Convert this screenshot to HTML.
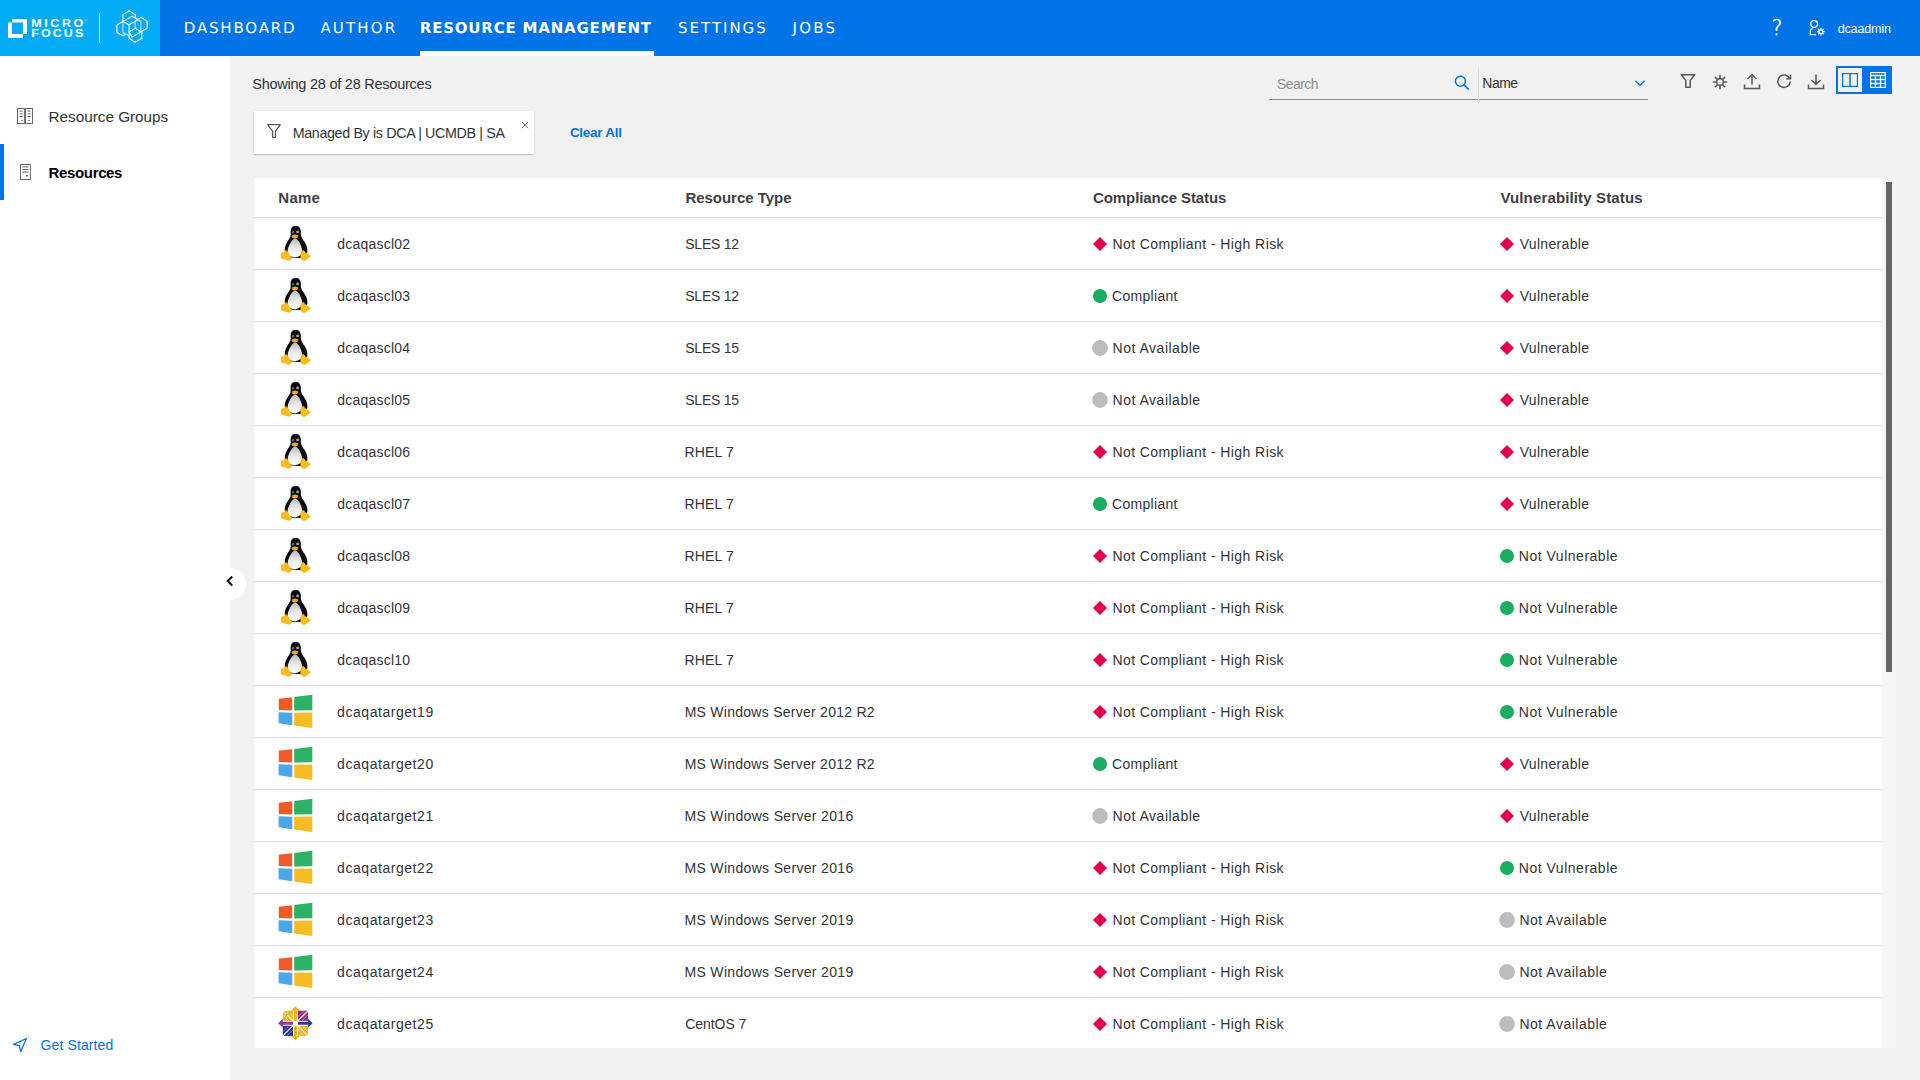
<!DOCTYPE html>
<html lang="en">
<head>
<meta charset="utf-8">
<title>Resource Management - Resources</title>
<style>
*{box-sizing:border-box;margin:0;padding:0}
html,body{width:1920px;height:1080px;overflow:hidden;background:#f1f1f1;font-family:"Liberation Sans",sans-serif;color:#323435}
svg{display:block;overflow:visible}
/* header */
#hdr{position:absolute;left:0;top:0;width:1920px;height:56px;background:#0073e7}
#logo{position:absolute;left:0;top:0;width:160px;height:56px;background:#02abf4}
.nav{position:absolute;top:18px;height:20px;line-height:20px;color:#fff;font-family:"DejaVu Sans","Liberation Sans",sans-serif;font-size:16px;letter-spacing:1.6px;white-space:nowrap;text-rendering:geometricPrecision}
.nav.on{font-weight:bold}
#navbar{position:absolute;left:420px;top:51px;width:234px;height:5px;background:#fff}
#help{position:absolute;left:1767px;top:15px;width:20px;height:26px;line-height:26px;color:#fff;font-family:"DejaVu Sans","Liberation Sans",sans-serif;font-weight:200;font-size:20.5px;-webkit-text-stroke:.5px #fff;text-align:center}
#user{position:absolute;left:1838px;top:19px;height:20px;line-height:20px;color:#fff;font-size:14px;white-space:nowrap}
/* sidebar */
#side{position:absolute;left:0;top:56px;width:230px;height:1024px;background:#fff}
.sitem{position:absolute;left:49px;height:24px;line-height:24px;font-size:16px;white-space:nowrap;color:#323435}
#selbar{position:absolute;left:0;top:88px;width:4px;height:56px;background:#0073e7}
#collapse{position:absolute;left:214px;top:568px;width:32px;height:32px;border-radius:16px;background:#fff}
/* toolbar */
.t{position:absolute;white-space:nowrap;line-height:20px;height:20px}
#chip{position:absolute;left:254px;top:111px;width:280px;height:43px;background:#fff;box-shadow:0 1px 1.500px rgba(0,0,0,.2),0 0 2px rgba(0,0,0,.08)}
.ul{position:absolute;height:1px;background:#8a8b8d;top:99px}
/* table */
#tbl{position:absolute;left:254px;top:178px;width:1628px;height:870px;background:#fff;overflow:hidden}
#thead{position:absolute;left:0;top:0;width:1628px;height:40px;border-bottom:1px solid #dcdee1;box-shadow:0 3px 7px rgba(0,0,0,.04);background:#fff;z-index:2}
.th{position:absolute;top:10px;height:20px;line-height:20px;font-weight:bold;font-size:15px;color:#3f4042;white-space:nowrap}
.row{position:absolute;left:0;width:1628px;height:52px;border-bottom:1px solid #dcdee1}
.c{position:absolute;top:16px;height:20px;line-height:20px;font-size:14px;color:#323435;white-space:nowrap}
.ic{position:absolute;left:24px;top:8px;width:36px;height:36px}
.dot{position:absolute;top:19px;width:14px;height:14px}
#sbtrack{position:absolute;left:1882px;top:178px;width:14px;height:870px;background:#f6f6f6}
#sbthumb{position:absolute;left:1886px;top:182px;width:6px;height:490px;background:#646567}
.tb{position:absolute;top:72px;width:20px;height:20px;fill:none;stroke:#58595b;stroke-width:1.5}
.k0{left:83.30px;letter-spacing:0.207px}
.k1{left:431.25px;letter-spacing:-0.238px}
.k2{left:858.40px;letter-spacing:0.423px}
.k3{left:1265.70px;letter-spacing:0.319px}
.k4{left:858.00px;letter-spacing:0.308px}
.k5{left:431.25px;letter-spacing:-0.238px}
.k6{left:858.60px;letter-spacing:0.504px}
.k7{left:430.50px;letter-spacing:0.153px}
.k8{left:1264.80px;letter-spacing:0.515px}
.k9{left:83.10px;letter-spacing:0.547px}
.k10{left:430.70px;letter-spacing:0.261px}
.k11{left:430.50px;letter-spacing:0.326px}
.k12{left:430.50px;letter-spacing:0.326px}
.k13{left:1265.40px;letter-spacing:0.504px}
.k14{left:431.25px;letter-spacing:-0.063px}
#n1{left:183.75px;font-size:15px;letter-spacing:1.843px}
#n2{left:320.40px;font-size:15px;letter-spacing:2.172px}
#n3{left:419.80px;font-size:15px;letter-spacing:0.803px}
#n4{left:678.10px;font-size:15px;letter-spacing:1.967px}
#n5{left:792.50px;font-size:15px;letter-spacing:2.281px}
#user{left:1837.70px;font-size:12.5px;letter-spacing:-0.15px}
#showing{left:252.25px;font-size:14.5px;letter-spacing:-0.24px}
#s1{left:48.60px;font-size:15.3px;letter-spacing:-0.017px}
#s2{left:48.60px;font-size:15px;letter-spacing:-0.358px}
#gs{left:40.50px;font-size:14px;letter-spacing:0.119px}
#chiptxt{left:38.70px;font-size:14.3px;letter-spacing:-0.359px}
#clear{left:569.90px;font-size:13.5px;letter-spacing:-0.278px}
#search{left:1277.10px;font-size:14px;letter-spacing:-0.594px}
#selname{left:1482.30px;font-size:14px;letter-spacing:-0.52px}
#h1{left:24.35px;font-size:15px;letter-spacing:0.246px}
#h2{left:431.40px;font-size:15px;letter-spacing:-0.024px}
#h3{left:839.10px;font-size:15px;letter-spacing:-0.112px}
#h4{left:1246.40px;font-size:15px;letter-spacing:0.146px}
</style>
</head>
<body>
<svg width="0" height="0" style="position:absolute">
<defs>
<linearGradient id="belly" x1="0" y1="0" x2="0" y2="1"><stop offset="0" stop-color="#b9babc"/><stop offset=".45" stop-color="#e6e6e7"/><stop offset="1" stop-color="#ffffff"/></linearGradient>
<symbol id="tux" viewBox="0 0 36 36">
  <path d="M17.6 -0.2c-3.1 0-5 2.3-5 5.4 0 1.6 .3 3.2 -.2 5 -1.2 3.4-4.6 6.900-5.500 11.200 -.5 2.400 .2 4.500 1.200 6.100l3.500 4.100 13.200 .6 4.300-5.400c.7-2.300 .2-5.600-1.200-8.600 -1.400-3-4.300-5.700-4.900-8.700 -.4-2 .1-3.100-.3-5.100 -.5-2.700-2.400-4.600-5.100-4.600z" fill="#0b0b0b"/>
  <path d="M17.2 12.800c-2.400 .1-3.900 2.400-5.300 5.100 -1.600 3-3 6.300-1.900 9.400 1 2.800 3.900 3.900 6.900 3.900 3 0 5.700-1.400 6.700-4.100 1-2.900 .1-6.300-1.400-9.200 -1.200-2.500-2.700-5.200-5-5.100z" fill="url(#belly)"/>
  <ellipse cx="15.100" cy="6.200" rx="1.100" ry="1.300" fill="#6d6e70"/><ellipse cx="19.600" cy="5.900" rx="1.400" ry="1.300" fill="#a9aaac"/>
  
  <path d="M13.600 10.300c.9-1.300 2.200-2 3.600-1.900 1.300 .1 2.600 .8 3.300 1.700 -.6 1.400-2.100 2.500-3.700 2.600 -1.500 0-2.800-1.100-3.200-2.400z" fill="#f6b51b"/>
  <path d="M14 10.400c1.100 .5 2.100 .7 3.200 .6 1-.1 2.100-.5 3-1" fill="none" stroke="#d98a06" stroke-width=".5"/>
  <path d="M6.700 24.300c1.400-.5 2.600 .6 3.600 2.100l2.700 4.300c.9 1.400 1 3.100-.9 3.700 -1.600 .5-3.200-.1-5-.7 -1.500-.5-3.500-.6-4.300-1.600 -.5-.7 .3-1.700 .3-2.700 0-.9-.5-1.800 .1-2.400 .8-.8 2.100 0 2.700-.9 .4-.6 .1-1.500 .8-1.800z" fill="#f6bd1e"/>
  <path d="M22.800 26.300c.4-1.300 1.500-2.300 2.700-2.100 1.100 .2 1.300 1.500 2.100 2.300 1.200 1.200 3.500 1.900 4.800 3.100 1 .9-.5 1.900-1.700 2.600 -1.500 .9-2.600 2.300-4.400 2.500 -1.700 .2-3.300-.6-3.700-2.400 -.4-2 -.2-4.400 .2-6z" fill="#f6bd1e"/>
  <path d="M7.400 25.600l1 .9m-.2-2l1.300 1.500" stroke="#e6531f" stroke-width=".5" fill="none"/>
</symbol>
<symbol id="win" viewBox="0 0 36 36">
  <path d="M.8 4.800L14.200 3.200V16.500L.8 16z" fill="#f05a28"/>
  <path d="M16.200 3L34.300 .7V16.200L16.200 16.600z" fill="#2db166"/>
  <path d="M.6 18.300L14.300 18.700V31.200L.6 29.300z" fill="#4aa7ea"/>
  <path d="M16.200 18.700L34.300 18.500V34.100L16.200 31.600z" fill="#f6bc25"/>
</symbol>
<symbol id="cent" viewBox="0 0 36 36">
  <g transform="translate(17.400 17.300)">
    <path d="M0 -17.300L4.200 -12.600H1.500V-2.200H-1.500V-12.600H-4.200z" fill="#f3b21f"/>
    <path d="M0 17.300L4.200 12.600H1.500V2.200H-1.500V12.600H-4.200z" fill="#e9bb26"/>
    <path d="M17.300 0L12.600 -4.200V-1.500H2.200V1.500H12.600V4.200z" fill="#303a9b"/>
    <path d="M-17.300 0L-12.600 -4.200V-1.500H-2.200V1.500H-12.600V4.200z" fill="#8c3a86"/>
    <path d="M-12.600 -12.600H-2.400V-2.400H-12.600z" fill="#f0b824"/>
    <path d="M2.400 -12.600H12.600V-2.400H2.400z" fill="#8a2f7e"/>
    <path d="M-12.600 2.400H-2.400V12.600H-12.600z" fill="#2f2f88"/>
    <path d="M2.400 2.400H12.600V12.600H2.400z" fill="#f2b022"/>
    <path d="M-12.600 -12.600L12.600 12.600M12.600 -12.600L-12.600 12.600" stroke="#f3eee6" stroke-width="1.300" fill="none"/>
    <path d="M-8.500 -12.600L-2.400 -6.500M-12.600 -8.500L-6.500 -2.400M8.500 12.600L2.400 6.500M12.600 8.500L6.500 2.400" stroke="#fbe6a8" stroke-width=".7" fill="none"/>
    <path d="M8.500 -12.600L2.400 -6.500M12.600 -8.500L6.500 -2.400" stroke="#c9a0c4" stroke-width=".7" fill="none"/>
    <path d="M-8.500 12.600L-2.400 6.500M-12.600 8.500L-6.500 2.400" stroke="#a9a8d6" stroke-width=".7" fill="none"/>
    <circle cx="-9" cy="-9" r=".6" fill="#35a85a"/><circle cx="-6" cy="-10.500" r=".6" fill="#35a85a"/><circle cx="-10.500" cy="-5" r=".6" fill="#35a85a"/><circle cx="-7" cy="-4" r=".6" fill="#35a85a"/>
    <circle cx="0" cy="6" r=".6" fill="#35a85a"/><circle cx=".5" cy="9" r=".6" fill="#35a85a"/><circle cx="-.4" cy="12" r=".6" fill="#35a85a"/><circle cx="0" cy="14.500" r=".6" fill="#35a85a"/>
    <path d="M-12 .1H-3" stroke="#e4558f" stroke-width=".8" stroke-dasharray="1 1" fill="none"/>
    <path d="M6 -10.500H11" stroke="#e4558f" stroke-width=".8" stroke-dasharray="1 1" fill="none"/>
    <rect x="-2.200" y="-2.200" width="4.400" height="4.400" fill="#fff"/>
  </g>
</symbol>
</defs>
</svg>
<!-- HEADER -->
<div id="hdr">
  <div id="logo">
    <svg width="160" height="56" viewBox="0 0 160 56">
      <path fill-rule="evenodd" fill="#fff" d="M12 19H27V34H23V38H8V22.500H12zM12 22.500V34H23V22.500z"/>
      <text transform="translate(31.300 26.600) scale(1.220 1)" font-family="Liberation Sans, sans-serif" font-weight="bold" font-size="10.300" fill="#fff" textLength="42.600" lengthAdjust="spacing">MICRO</text>
      <text transform="translate(31.300 37) scale(1.220 1)" font-family="Liberation Sans, sans-serif" font-weight="bold" font-size="10.300" fill="#fff" textLength="42.600" lengthAdjust="spacing">FOCUS</text>
      <text x="84.300" y="22.300" font-family="Liberation Sans, sans-serif" font-size="3.200" fill="#cfeefd">®</text>
      <rect x="99" y="13" width="1" height="30" fill="#fff"/>
      <g fill="none" stroke="#fff" stroke-width="1.100" stroke-linejoin="round" stroke-linecap="round">
        <path d="M122.900 21.600V14.700L129.100 10.700L135.300 14.700V18.200"/>
        <path d="M122.900 21.600L132 16.200L138.200 19.600L129.100 24.700Z"/>
        <path d="M129.100 24.700V38.200L135.100 42.200L141.800 38.400V31.800"/>
        <path d="M122.900 21.600L116.900 25.100V32.400L122.900 35.800L125.800 34"/>
        <path d="M138.200 19.600L141.100 17.300L147.100 21.300V28.200L141.100 31.800"/>
        <path d="M129.100 32L135.100 28.200L141.100 31.800L132.200 37.100Z"/>
        <path d="M122.900 21.600V32.400L129.100 36" stroke="#bfe6fc"/>
        <path d="M135.100 21.600V28.200M140.900 21.800V31.100M138.200 19.600L140.900 21.800" stroke="#bfe6fc"/>
      </g>
    </svg>
  </div>
  <div class="nav" id="n1">DASHBOARD</div>
  <div class="nav" id="n2">AUTHOR</div>
  <div class="nav on" id="n3">RESOURCE MANAGEMENT</div>
  <div class="nav" id="n4">SETTINGS</div>
  <div class="nav" id="n5">JOBS</div>
  <div id="navbar"></div>
  <div id="help">?</div>
  <svg style="position:absolute;left:1806px;top:18px" width="22" height="22" viewBox="0 0 22 22" fill="none" stroke="#fff" stroke-width="1.300">
    <circle cx="8.150" cy="6.100" r="3.400"/>
    <path d="M9.900 16.700H4.300V13.600C4.300 11.900 5.200 10.900 6.500 10.400"/>
    <circle cx="14.900" cy="13.700" r="1.900" stroke-width="1.500"/>
    <path d="M17.40 13.70L18.60 13.70M16.67 15.47L17.52 16.32M14.90 16.20L14.90 17.40M13.13 15.47L12.28 16.32M12.40 13.70L11.20 13.70M13.13 11.93L12.28 11.08M14.90 11.20L14.90 10.00M16.67 11.93L17.52 11.08" stroke-width="1.300"/>
  </svg>
  <div id="user">dcaadmin</div>
</div>
<!-- SIDEBAR -->
<div id="side">
  <svg style="position:absolute;left:17px;top:52px" width="16" height="16" viewBox="0 0 16 16" fill="none" stroke="#636466" stroke-width="1">
    <rect x=".5" y=".5" width="6.900" height="15"/><rect x="8.600" y=".5" width="6.900" height="15"/>
    <path d="M2.600 3.100H5.600M2.600 5.800H5.600M2.600 8.500H5.600M10.600 3.100H13.600M10.600 5.800H13.600M10.600 8.500H13.600"/>
    <path d="M4.200 12.400H5.600M11.400 12.400H12.800" stroke-width="1.400"/>
  </svg>
  <div class="sitem" id="s1" style="top:49px">Resource Groups</div>
  <div id="selbar"></div>
  <svg style="position:absolute;left:20px;top:108px" width="11" height="16" viewBox="0 0 11 16" fill="none" stroke="#636466" stroke-width="1">
    <rect x=".5" y=".5" width="9.800" height="15"/><path d="M2.300 2.900H8.300M2.300 5.500H8.300M2.300 8.100H8.300"/><path d="M6.100 11.800H7.700" stroke-width="1.400"/>
  </svg>
  <div class="sitem" id="s2" style="top:105px;font-weight:bold;color:#000">Resources</div>
  <svg style="position:absolute;left:12px;top:981px" width="16" height="16" viewBox="0 0 16 16" fill="none" stroke="#0073e7" stroke-width="1.300" stroke-linejoin="round">
    <path d="M14.500 1.500L1.500 7.300L7.300 8.700L8.700 14.500Z"/>
  </svg>
  <div class="sitem" id="gs" style="top:977px;color:#0073e7">Get Started</div>
</div>
<div id="collapse">
  <svg width="32" height="32" viewBox="0 0 32 32" fill="none" stroke="#000" stroke-width="1.800"><path d="M18.300 8.500L13.600 13L18.300 17.500"/></svg>
</div>
<!-- TOOLBAR -->
<div class="t" id="showing" style="top:74px">Showing 28 of 28 Resources</div>
<div class="t" id="search" style="top:74px;color:#8e8f91">Search</div>
<svg style="position:absolute;left:1452px;top:73px" width="18" height="18" viewBox="0 0 18 18" fill="none" stroke="#0073e7" stroke-width="1.500"><circle cx="8.400" cy="8.300" r="5"/><path d="M12 11.900L16.700 16.600"/></svg>
<div style="position:absolute;left:1478px;top:68px;width:1px;height:31px;background:#dcdcdc"></div>
<div class="ul" style="left:1269px;width:209px"></div>
<div class="ul" style="left:1479px;width:169px"></div>
<div class="t" id="selname" style="top:73px;color:#323435">Name</div>
<svg style="position:absolute;left:1634px;top:79px" width="12" height="8" viewBox="0 0 12 8" fill="none" stroke="#0073e7" stroke-width="1.500"><path d="M1.500 1.800L6 6.200L10.500 1.800"/></svg>
<svg class="tb" style="left:1678px" viewBox="0 0 20 20"><path d="M3.300 2.800H16.700L12.200 8.600V15.200H7.800V8.600Z" stroke-linejoin="round"/></svg>
<svg class="tb" style="left:1710px" viewBox="0 0 20 20"><circle cx="10" cy="10" r="3.300"/><path d="M10 2.800V6M10 14V17.200M2.800 10H6M14 10H17.200M4.900 4.900L7.200 7.200M12.800 12.800L15.100 15.100M15.100 4.900L12.800 7.200M7.200 12.800L4.900 15.100" stroke-width="1.600"/></svg>
<svg class="tb" style="left:1742px" viewBox="0 0 20 20"><path d="M10 12.500V2.500M5.500 7L10 2.500L14.500 7M2.500 12.500V16.500H17.500V12.500"/></svg>
<svg class="tb" style="left:1774px" viewBox="0 0 20 20"><path d="M15.600 6.500A6.200 6.200 0 1 0 16.200 9.500M16.500 2.500V6.700H12.300"/></svg>
<svg class="tb" style="left:1806px" viewBox="0 0 20 20"><path d="M10 2.500V12.500M5.500 8L10 12.500L14.500 8M2.500 12.500V16.500H17.500V12.500"/></svg>
<div style="position:absolute;left:1836px;top:66px;width:56px;height:28px;background:#0073e7"></div>
<div style="position:absolute;left:1838px;top:68px;width:24px;height:24px;background:#f1f1f1"></div>
<svg style="position:absolute;left:1842px;top:73px" width="16" height="14" viewBox="0 0 16 14" fill="none" stroke="#0073e7" stroke-width="1.200"><rect x=".6" y=".6" width="14.800" height="12.800"/><path d="M8 .6V13.400" stroke-width="1.500"/></svg>
<svg style="position:absolute;left:1870px;top:72px" width="16" height="16" viewBox="0 0 16 16"><rect width="16" height="16" fill="#fff"/><rect x="1.300" y="1.200" width="13.400" height="1.600" fill="#1f6fd0"/><g fill="#0073e7"><rect x="1.200" y="4.200" width="3.600" height="2.600"/><rect x="6.200" y="4.200" width="3.600" height="2.600"/><rect x="11.200" y="4.200" width="3.600" height="2.600"/><rect x="1.200" y="8.200" width="3.600" height="2.600"/><rect x="6.200" y="8.200" width="3.600" height="2.600"/><rect x="11.200" y="8.200" width="3.600" height="2.600"/><rect x="1.200" y="12.200" width="3.600" height="2.600"/><rect x="6.200" y="12.200" width="3.600" height="2.600"/><rect x="11.200" y="12.200" width="3.600" height="2.600"/></g></svg>
<!-- FILTER CHIP -->
<div id="chip">
  <svg style="position:absolute;left:13px;top:13px" width="15" height="15" viewBox="0 0 15 15" fill="none" stroke="#58595b" stroke-width="1.200" stroke-linejoin="round"><path d="M.7 .7H13.300L8.400 7.200V13.300H5.600V7.200Z"/></svg>
  <div class="t" id="chiptxt" style="top:12px">Managed By is DCA | UCMDB | SA</div>
  <svg style="position:absolute;left:266.500px;top:9.500px" width="8" height="8" viewBox="0 0 8 8" fill="none" stroke="#6b6c6e" stroke-width="1"><path d="M.8 .8L7.200 7.200M7.200 .8L.8 7.200"/></svg>
</div>
<div class="t" id="clear" style="top:123px;font-weight:bold;color:#0073e7">Clear All</div>
<!-- TABLE -->
<div id="tbl">
  <div id="thead">
    <div class="th" id="h1">Name</div>
    <div class="th" id="h2">Resource Type</div>
    <div class="th" id="h3">Compliance Status</div>
    <div class="th" id="h4">Vulnerability Status</div>
  </div>
<div class="row" style="top:40px"><svg class="ic"><use href="#tux"/></svg><div class="c k0">dcaqascl02</div><div class="c k1">SLES 12</div><svg class="dot" style="left:839px" viewBox="0 0 14 14"><path d="M7 0L14 7L7 14L0 7Z" fill="#e5004c"/></svg><div class="c k2">Not Compliant - High Risk</div><svg class="dot" style="left:1246px" viewBox="0 0 14 14"><path d="M7 0L14 7L7 14L0 7Z" fill="#e5004c"/></svg><div class="c k3">Vulnerable</div></div>
<div class="row" style="top:92px"><svg class="ic"><use href="#tux"/></svg><div class="c k0">dcaqascl03</div><div class="c k1">SLES 12</div><svg class="dot" style="left:839px" viewBox="0 0 14 14"><circle cx="7" cy="7" r="7" fill="#1aac60"/></svg><div class="c k4">Compliant</div><svg class="dot" style="left:1246px" viewBox="0 0 14 14"><path d="M7 0L14 7L7 14L0 7Z" fill="#e5004c"/></svg><div class="c k3">Vulnerable</div></div>
<div class="row" style="top:144px"><svg class="ic"><use href="#tux"/></svg><div class="c k0">dcaqascl04</div><div class="c k5">SLES 15</div><svg class="dot" style="left:838px;top:18px;width:16px;height:16px" viewBox="0 0 16 16"><circle cx="8" cy="8" r="7.900" fill="#bdbdbd"/></svg><div class="c k6">Not Available</div><svg class="dot" style="left:1246px" viewBox="0 0 14 14"><path d="M7 0L14 7L7 14L0 7Z" fill="#e5004c"/></svg><div class="c k3">Vulnerable</div></div>
<div class="row" style="top:196px"><svg class="ic"><use href="#tux"/></svg><div class="c k0">dcaqascl05</div><div class="c k5">SLES 15</div><svg class="dot" style="left:838px;top:18px;width:16px;height:16px" viewBox="0 0 16 16"><circle cx="8" cy="8" r="7.900" fill="#bdbdbd"/></svg><div class="c k6">Not Available</div><svg class="dot" style="left:1246px" viewBox="0 0 14 14"><path d="M7 0L14 7L7 14L0 7Z" fill="#e5004c"/></svg><div class="c k3">Vulnerable</div></div>
<div class="row" style="top:248px"><svg class="ic"><use href="#tux"/></svg><div class="c k0">dcaqascl06</div><div class="c k7">RHEL 7</div><svg class="dot" style="left:839px" viewBox="0 0 14 14"><path d="M7 0L14 7L7 14L0 7Z" fill="#e5004c"/></svg><div class="c k2">Not Compliant - High Risk</div><svg class="dot" style="left:1246px" viewBox="0 0 14 14"><path d="M7 0L14 7L7 14L0 7Z" fill="#e5004c"/></svg><div class="c k3">Vulnerable</div></div>
<div class="row" style="top:300px"><svg class="ic"><use href="#tux"/></svg><div class="c k0">dcaqascl07</div><div class="c k7">RHEL 7</div><svg class="dot" style="left:839px" viewBox="0 0 14 14"><circle cx="7" cy="7" r="7" fill="#1aac60"/></svg><div class="c k4">Compliant</div><svg class="dot" style="left:1246px" viewBox="0 0 14 14"><path d="M7 0L14 7L7 14L0 7Z" fill="#e5004c"/></svg><div class="c k3">Vulnerable</div></div>
<div class="row" style="top:352px"><svg class="ic"><use href="#tux"/></svg><div class="c k0">dcaqascl08</div><div class="c k7">RHEL 7</div><svg class="dot" style="left:839px" viewBox="0 0 14 14"><path d="M7 0L14 7L7 14L0 7Z" fill="#e5004c"/></svg><div class="c k2">Not Compliant - High Risk</div><svg class="dot" style="left:1246px" viewBox="0 0 14 14"><circle cx="7" cy="7" r="7" fill="#1aac60"/></svg><div class="c k8">Not Vulnerable</div></div>
<div class="row" style="top:404px"><svg class="ic"><use href="#tux"/></svg><div class="c k0">dcaqascl09<span style="color:#ecd3b8">.</span></div><div class="c k7">RHEL 7</div><svg class="dot" style="left:839px" viewBox="0 0 14 14"><path d="M7 0L14 7L7 14L0 7Z" fill="#e5004c"/></svg><div class="c k2">Not Compliant - High Risk</div><svg class="dot" style="left:1246px" viewBox="0 0 14 14"><circle cx="7" cy="7" r="7" fill="#1aac60"/></svg><div class="c k8">Not Vulnerable</div></div>
<div class="row" style="top:456px"><svg class="ic"><use href="#tux"/></svg><div class="c k0">dcaqascl10</div><div class="c k7">RHEL 7</div><svg class="dot" style="left:839px" viewBox="0 0 14 14"><path d="M7 0L14 7L7 14L0 7Z" fill="#e5004c"/></svg><div class="c k2">Not Compliant - High Risk</div><svg class="dot" style="left:1246px" viewBox="0 0 14 14"><circle cx="7" cy="7" r="7" fill="#1aac60"/></svg><div class="c k8">Not Vulnerable</div></div>
<div class="row" style="top:508px"><svg class="ic"><use href="#win"/></svg><div class="c k9">dcaqatarget19</div><div class="c k10">MS Windows Server 2012 R2</div><svg class="dot" style="left:839px" viewBox="0 0 14 14"><path d="M7 0L14 7L7 14L0 7Z" fill="#e5004c"/></svg><div class="c k2">Not Compliant - High Risk</div><svg class="dot" style="left:1246px" viewBox="0 0 14 14"><circle cx="7" cy="7" r="7" fill="#1aac60"/></svg><div class="c k8">Not Vulnerable</div></div>
<div class="row" style="top:560px"><svg class="ic"><use href="#win"/></svg><div class="c k9">dcaqatarget20</div><div class="c k10">MS Windows Server 2012 R2</div><svg class="dot" style="left:839px" viewBox="0 0 14 14"><circle cx="7" cy="7" r="7" fill="#1aac60"/></svg><div class="c k4">Compliant</div><svg class="dot" style="left:1246px" viewBox="0 0 14 14"><path d="M7 0L14 7L7 14L0 7Z" fill="#e5004c"/></svg><div class="c k3">Vulnerable</div></div>
<div class="row" style="top:612px"><svg class="ic"><use href="#win"/></svg><div class="c k9">dcaqatarget21</div><div class="c k11">MS Windows Server 2016</div><svg class="dot" style="left:838px;top:18px;width:16px;height:16px" viewBox="0 0 16 16"><circle cx="8" cy="8" r="7.900" fill="#bdbdbd"/></svg><div class="c k6">Not Available</div><svg class="dot" style="left:1246px" viewBox="0 0 14 14"><path d="M7 0L14 7L7 14L0 7Z" fill="#e5004c"/></svg><div class="c k3">Vulnerable</div></div>
<div class="row" style="top:664px"><svg class="ic"><use href="#win"/></svg><div class="c k9">dcaqatarget22</div><div class="c k11">MS Windows Server 2016</div><svg class="dot" style="left:839px" viewBox="0 0 14 14"><path d="M7 0L14 7L7 14L0 7Z" fill="#e5004c"/></svg><div class="c k2">Not Compliant - High Risk</div><svg class="dot" style="left:1246px" viewBox="0 0 14 14"><circle cx="7" cy="7" r="7" fill="#1aac60"/></svg><div class="c k8">Not Vulnerable</div></div>
<div class="row" style="top:716px"><svg class="ic"><use href="#win"/></svg><div class="c k9">dcaqatarget23</div><div class="c k12">MS Windows Server 2019</div><svg class="dot" style="left:839px" viewBox="0 0 14 14"><path d="M7 0L14 7L7 14L0 7Z" fill="#e5004c"/></svg><div class="c k2">Not Compliant - High Risk</div><svg class="dot" style="left:1245px;top:18px;width:16px;height:16px" viewBox="0 0 16 16"><circle cx="8" cy="8" r="7.900" fill="#bdbdbd"/></svg><div class="c k13">Not Available</div></div>
<div class="row" style="top:768px"><svg class="ic"><use href="#win"/></svg><div class="c k9">dcaqatarget24</div><div class="c k12">MS Windows Server 2019</div><svg class="dot" style="left:839px" viewBox="0 0 14 14"><path d="M7 0L14 7L7 14L0 7Z" fill="#e5004c"/></svg><div class="c k2">Not Compliant - High Risk</div><svg class="dot" style="left:1245px;top:18px;width:16px;height:16px" viewBox="0 0 16 16"><circle cx="8" cy="8" r="7.900" fill="#bdbdbd"/></svg><div class="c k13">Not Available</div></div>
<div class="row" style="top:820px"><svg class="ic"><use href="#cent"/></svg><div class="c k9">dcaqatarget25</div><div class="c k14">CentOS 7</div><svg class="dot" style="left:839px" viewBox="0 0 14 14"><path d="M7 0L14 7L7 14L0 7Z" fill="#e5004c"/></svg><div class="c k2">Not Compliant - High Risk</div><svg class="dot" style="left:1245px;top:18px;width:16px;height:16px" viewBox="0 0 16 16"><circle cx="8" cy="8" r="7.900" fill="#bdbdbd"/></svg><div class="c k13">Not Available</div></div>
</div>
<div id="sbtrack"></div>
<div id="sbthumb"></div>
</body>
</html>
